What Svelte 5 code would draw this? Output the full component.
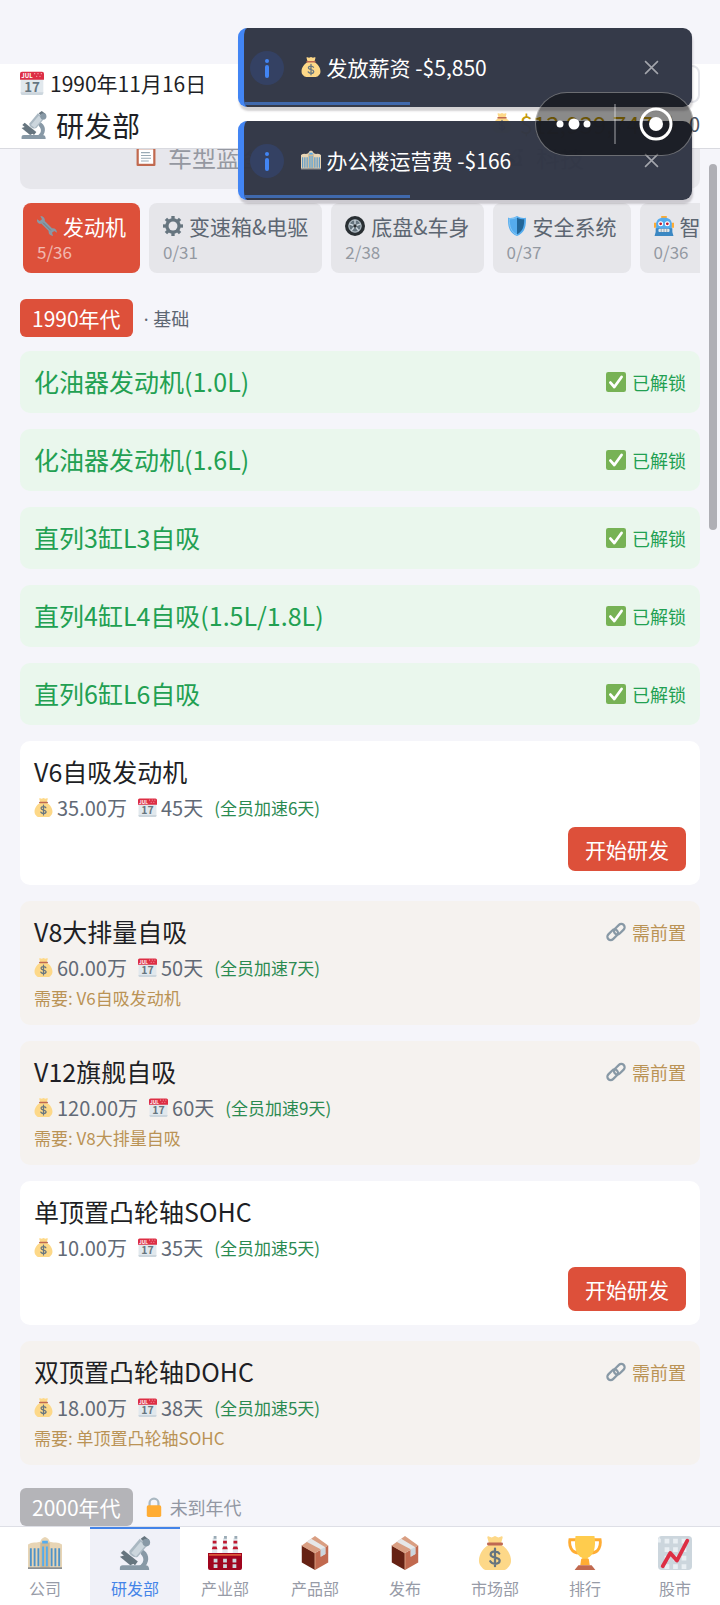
<script>
  const toasts = [
    { id: 1, icon: 'money', text: '发放薪资 -$5,850' },
    { id: 2, icon: 'office', text: '办公楼运营费 -$166' },
  ];

  const categories = [
    { icon: 'wrench', name: '发动机', count: '5/36' },
    { icon: 'gear', name: '变速箱&电驱', count: '0/31' },
    { icon: 'tyre', name: '底盘&车身', count: '2/38' },
    { icon: 'shield', name: '安全系统', count: '0/37' },
    { icon: 'robot', name: '智能驾驶', count: '0/36' },
  ];

  const techs = [
    { name: '化油器发动机(1.0L)', state: 'unlocked' },
    { name: '化油器发动机(1.6L)', state: 'unlocked' },
    { name: '直列3缸L3自吸', state: 'unlocked' },
    { name: '直列4缸L4自吸(1.5L/1.8L)', state: 'unlocked' },
    { name: '直列6缸L6自吸', state: 'unlocked' },
    { name: 'V6自吸发动机', state: 'ready', cost: '35.00万', days: 45, boost: 6 },
    { name: 'V8大排量自吸', state: 'locked', cost: '60.00万', days: 50, boost: 7, needs: 'V6自吸发动机' },
    { name: 'V12旗舰自吸', state: 'locked', cost: '120.00万', days: 60, boost: 9, needs: 'V8大排量自吸' },
    { name: '单顶置凸轮轴SOHC', state: 'ready', cost: '10.00万', days: 35, boost: 5 },
    { name: '双顶置凸轮轴DOHC', state: 'locked', cost: '18.00万', days: 38, boost: 5, needs: '单顶置凸轮轴SOHC' },
  ];

  const navItems = [
    { icon: 'office', name: '公司' },
    { icon: 'microscope', name: '研发部' },
    { icon: 'factory', name: '产业部' },
    { icon: 'box', name: '产品部' },
    { icon: 'box', name: '发布' },
    { icon: 'money', name: '市场部' },
    { icon: 'trophy', name: '排行' },
    { icon: 'chart', name: '股市' },
  ];

  let activeCategory = $state('发动机');
  let activeNav = $state('研发部');
  let closed = $state([]);
  let visibleToasts = $derived(toasts.filter((t) => !closed.includes(t.id)));
</script>

{#snippet icon(name)}
  <svg class="icon" viewBox="0 0 36 36" aria-hidden="true">
    {#if name === 'calendar'}
      <path fill="#e1e8ed" d="M1 9h34v24a3 3 0 0 1-3 3H4a3 3 0 0 1-3-3z" />
      <path fill="#ccd6dd" d="M1 32h34v1a3 3 0 0 1-3 3H4a3 3 0 0 1-3-3z" />
      <path fill="#dd2e44" d="M3 1h30a3 3 0 0 1 3 3v9H0V4a3 3 0 0 1 3-3z" />
      <g fill="#f4abba">
        <circle cx="22" cy="4" r="1" /><circle cx="27" cy="4" r="1" /><circle cx="32" cy="4" r="1" />
        <circle cx="25" cy="8" r="1" /><circle cx="30" cy="8" r="1" />
      </g>
      <text x="2" y="11" font-size="9" font-weight="700" fill="#fff">JUL</text>
      <text x="18" y="31" font-size="20" font-weight="700" text-anchor="middle" fill="#66757f">17</text>
    {:else if name === 'money'}
      <path fill="#fdd888" d="M12 9 10 2c-.4-1 .5-2 1.500-1.500l3 1L18 0l3.500 1.500 3-1c1-.5 2 .5 1.500 1.500l-2 7c6 3 11 10 11 17 0 3-1 5-3 7-1.500 2-3 3-6 3H10c-3 0-4.500-1-6-3-2-2-3-4-3-7 0-7 5-14 11-17z" />
      <path fill="#bf6952" d="M11 7h14a1.500 1.500 0 0 1 0 3H11a1.500 1.500 0 0 1 0-3z" />
      <path fill="none" stroke="#67757f" stroke-width="2.400" stroke-linecap="round" d="M22.500 18.500c-1-1.700-2.500-2.200-4.500-2.200-2.700 0-4.600 1.200-4.600 3.200 0 4.500 9.500 2.200 9.500 6.500 0 2.200-2 3.400-4.700 3.400-2.400 0-4.200-.8-5.200-2.600M18 13.500v18.500" />
    {:else if name === 'microscope'}
      <path fill="#66757f" d="m3 18 3-3 15 12-3 4z" />
      <path fill="#8899a6" d="M25 14c8 3 9 12 4 18h-7c5-3 7-8 2-13z" />
      <path fill="#aab8c2" d="m12 16 11-13 8 7-10 12c-3 2-10-2-9-6z" />
      <path fill="#ccd6dd" d="m14 18 10-12 5 4-10 12z" />
      <path fill="#66757f" d="m24 3 4-3 5 4-3 5z" />
      <circle cx="30" cy="7" r="4" fill="#8899a6" />
      <path fill="#8899a6" d="M2 34c0-2 1-3 3-3h24c3 0 4 2 4 5H2z" />
      <path fill="#66757f" d="m2 22 6-2 9 9-4 2z" />
    {:else if name === 'office'}
      <path fill="#e8d5b5" d="M0 9q4-3 9-2l4-1q1-4 5-5 4 1 5 5l4 1q5-1 9 2v25H0z" />
      <path fill="#cdb996" d="M13 7h10v27H13z" />
      <path fill="#4f93c8" d="M2 13h2v19H2zm4 0h2v19H6zm4 0h2v19h-2zm14 0h2v19h-2zm4 0h2v19h-2zm4 0h2v19h-2z" />
      <path fill="#55acee" d="M15 11h2v21h-2zm4 0h2v21h-2zM15 5h6v3h-6z" />
      <path fill="#8c8f92" d="M0 33h36v2H0z" />
    {:else if name === 'factory'}
      <path fill="#e1e8ed" d="m5 2 4 0 1 18H4zm11 0 4 0 1 18h-6zm11 0 4 0 1 18h-6z" />
      <path fill="#be1931" d="M5 5h4v3H5zm0 6h4l1 3H4zm11-6h4v3h-4zm0 6h4l1 3h-6zM27 5h4v3h-4zm0 6h4l1 3h-6z" />
      <path fill="#99aab5" d="M6 0h3v3H6zm11 0h3v3h-3zm11 0h3v3h-3z" />
      <path fill="#a0041e" d="M0 18h36v16a2 2 0 0 1-2 2H2a2 2 0 0 1-2-2z" />
      <path fill="#dd5a3a" d="M1 19h34v2H1z" />
      <path fill="#ccd6dd" d="M6 24h4v4H6zm10 0h4v4h-4zm10 0h4v4h-4zM6 30h4v4H6zm10 0h4v4h-4zm10 0h4v4h-4z" />
    {:else if name === 'box'}
      <path fill="#662113" d="M4 10v18l14 8V18z" />
      <path fill="#c1694f" d="M18 18v18l14-8V10z" />
      <path fill="#d99e82" d="M18 0 4 10l14 8 14-8z" />
      <path fill="#e6e7e8" d="m9 6 5-3 15 9v7l-5 3v-8z" />
      <path fill="#ccd6dd" d="m24 14 5-2v7l-5 3z" />
      <path fill="none" stroke="#d99e82" d="m4 10 14 8v18" />
    {:else if name === 'trophy'}
      <path fill="none" stroke="#ffac33" stroke-width="3" d="M9 4H2c-1 6 1 14 10 14M27 4h7c1 6-1 14-10 14" />
      <path fill="#ffcc4d" d="M8 0h20c2 12-1 21-7 23v7h-6v-7C9 21 6 12 8 0z" />
      <path fill="#ffac33" d="M14 24h8l1 7H13z" />
      <path fill="#c1694f" d="M11 31h14l4 5H7z" />
    {:else if name === 'chart'}
      <rect width="36" height="36" rx="4" fill="#ccd6dd" />
      <path fill="#e9eff3" d="M0 4a4 4 0 0 1 2-3v2h1v4H0zm7-1h5v5H7zm9 0h5v5h-5zm9 0h5v5h-5zM7 12h5v5H7zm9 0h5v5h-5zm9 0h5v5h-5zM7 21h5v5H7zm9 0h5v5h-5zm9 0h5v5h-5zM7 30h5v5H7zm9 0h5v5h-5zm9 0h5v5h-5z" />
      <path fill="none" stroke="#dd2e44" stroke-width="4" stroke-linecap="round" stroke-linejoin="round" d="m5 32 8-14 7 8L31 5" />
    {:else if name === 'clipboard'}
      <rect x="1" y="2" width="34" height="34" rx="2" fill="#c1694f" />
      <path fill="#fff" d="M5 6h26v26H5z" />
      <path stroke="#99aab5" stroke-width="2" d="M9 12h16M9 17h18M9 22h18M9 27h14" />
      <path fill="#ccd6dd" d="M12 0h12v6H12z" />
    {:else if name === 'wrench'}
      <path fill="#8899a6" d="M6 0c5 0 9 4 8 9l13 13c5-1 9 3 9 8l-5-3-4 3 2 6c-5 0-9-4-8-9L8 14C3 15-1 11 0 6l5 3 4-3z" />
      <path fill="none" stroke="#66757f" stroke-width="1.500" d="m11 12 14 14" />
    {:else if name === 'gear'}
      <g fill="#66757f">
        <circle cx="18" cy="18" r="14" />
        <path d="M15 0h6v36h-6z" />
        <path d="M15 0h6v36h-6z" transform="rotate(45 18 18)" />
        <path d="M15 0h6v36h-6z" transform="rotate(90 18 18)" />
        <path d="M15 0h6v36h-6z" transform="rotate(135 18 18)" />
      </g>
      <circle cx="18" cy="18" r="8" fill="#e6e6ea" />
    {:else if name === 'tyre'}
      <circle cx="18" cy="18" r="18" fill="#292f33" />
      <circle cx="18" cy="18" r="12" fill="#66757f" />
      <circle cx="18" cy="18" r="11" fill="none" stroke="#ccd6dd" stroke-width="1.500" />
      <path stroke="#ccd6dd" stroke-width="2.500" d="M18 18V7m0 11 10-4M18 18l7 9m-7-9-7 9m7-9L8 14" />
      <circle cx="18" cy="18" r="3" fill="#292f33" />
    {:else if name === 'shield'}
      <path fill="#55acee" d="M18 0c5 3 10 4 16 3 1 17-3 28-16 33C5 31 1 20 2 3 8 4 13 3 18 0z" />
      <path fill="#226699" d="M18 3c4 2 8 3 13 3 0 14-3 22-13 27z" />
      <path fill="none" stroke="#8ccaf7" stroke-width="1.500" d="M18 2C13 5 9 5 4 5c0 15 4 24 14 29" />
    {:else if name === 'robot'}
      <path fill="#ffac33" d="M13 0h10v5H13zM0 12h5v9H0zm31 0h5v9h-5z" />
      <path fill="#55acee" d="M4 13C5 6 10 3 18 3s13 3 14 10v11H4z" />
      <path fill="#3b88c3" d="M3 22h30v7l2 7H1l2-7z" />
      <circle cx="12" cy="14" r="4.500" fill="#fff" /><circle cx="24" cy="14" r="4.500" fill="#fff" />
      <circle cx="12" cy="14" r="2.500" fill="#be1931" /><circle cx="24" cy="14" r="2.500" fill="#be1931" />
      <rect x="8" y="23" width="20" height="6" rx="2" fill="#e1e8ed" />
      <path stroke="#66757f" d="M13 23v6m5-6v6m5-6v6" />
    {:else if name === 'check'}
      <rect width="36" height="36" rx="4" fill="#77b255" />
      <path fill="none" stroke="#fff" stroke-width="5" stroke-linecap="round" stroke-linejoin="round" d="m8 19 7 8L28 9" />
    {:else if name === 'link'}
      <g fill="none" stroke="#8899a6" stroke-width="4">
        <rect x="13" y="7" width="22" height="12" rx="6" transform="rotate(-45 24 13)" />
        <rect x="1" y="17" width="22" height="12" rx="6" transform="rotate(-45 12 23)" />
      </g>
    {:else if name === 'lock'}
      <path fill="none" stroke="#aab8c2" stroke-width="4" d="M10 18v-7a8 8 0 0 1 16 0v7" />
      <rect x="5" y="15" width="26" height="21" rx="3" fill="#ffac33" />
    {/if}
  </svg>
{/snippet}

<div class="app">
  <header>
    <div class="row">
      <span class="date">{@render icon('calendar')} 1990年11月16日</span>
      <button class="speed" aria-label="速度"></button>
    </div>
    <div class="row">
      <h1>{@render icon('microscope')} 研发部</h1>
      <div class="wallet">
        {@render icon('money')}
        <span class="cash">$12,939,747</span>
        <span class="star">★</span>
        <span>0</span>
      </div>
    </div>
  </header>

  <main>
    <div class="views">
      <button>{@render icon('clipboard')} 车型蓝图</button>
      <button>{@render icon('microscope')} 科技</button>
    </div>

    <div class="categories">
      {#each categories as cat}
        <button
          class="category"
          class:active={cat.name === activeCategory}
          onclick={() => (activeCategory = cat.name)}
        >
          <span class="cat-name">{@render icon(cat.icon)}{cat.name}</span>
          <span class="cat-count">{cat.count}</span>
        </button>
      {/each}
    </div>

    <div class="era">
      <span class="era-badge">1990年代</span>
      <span class="era-note">· 基础</span>
    </div>

    <div class="techs">
      {#each techs as tech}
        <section class="tech {tech.state}">
          <div class="tech-head">
            <h2>{tech.name}</h2>
            {#if tech.state === 'unlocked'}
              <span class="status">{@render icon('check')}已解锁</span>
            {:else if tech.state === 'locked'}
              <span class="status">{@render icon('link')}需前置</span>
            {/if}
          </div>
          {#if tech.cost}
            <div class="meta">
              <span>{@render icon('money')}{tech.cost}</span>
              <span>{@render icon('calendar')}{tech.days}天</span>
              <span class="boost">(全员加速{tech.boost}天)</span>
            </div>
          {/if}
          {#if tech.needs}
            <p class="needs">需要: {tech.needs}</p>
          {/if}
          {#if tech.state === 'ready'}
            <button class="start">开始研发</button>
          {/if}
        </section>
      {/each}
    </div>

    <div class="era next">
      <span class="era-badge future">2000年代</span>
      <span class="era-note muted">{@render icon('lock')}未到年代</span>
    </div>
  </main>

  <nav>
    {#each navItems as item}
      <a
        href="#{item.name}"
        class:active={item.name === activeNav}
        onclick={() => (activeNav = item.name)}
      >
        {@render icon(item.icon)}
        <span>{item.name}</span>
      </a>
    {/each}
  </nav>

  <div class="scrollbar"></div>

  <div class="toasts">
    {#each visibleToasts as toast (toast.id)}
      <div class="toast">
        <svg class="info" viewBox="0 0 34 34" aria-hidden="true">
          <circle cx="17" cy="17" r="17" fill="#344163" />
          <circle cx="17" cy="10" r="2" fill="#4285f4" />
          <path stroke="#4285f4" stroke-width="4" stroke-linecap="round" d="M17 16v9" />
        </svg>
        <span class="toast-text">{@render icon(toast.icon)}{toast.text}</span>
        <button class="close" aria-label="关闭" onclick={() => closed.push(toast.id)}>
          <svg viewBox="0 0 14 14"><path d="m1 1 12 12M13 1 1 13" /></svg>
        </button>
        <div class="progress"></div>
      </div>
    {/each}
  </div>

  <div class="capsule">
    <button aria-label="更多">
      <svg viewBox="0 0 36 36">
        <circle cx="4" cy="18" r="3.500" /><circle cx="18" cy="18" r="5.500" /><circle cx="31" cy="18" r="3.500" />
      </svg>
    </button>
    <span class="divider"></span>
    <button aria-label="退出">
      <svg viewBox="0 0 36 36">
        <circle cx="18" cy="18" r="15" fill="none" stroke="#fff" stroke-width="3" />
        <circle cx="18" cy="18" r="7" />
      </svg>
    </button>
  </div>
</div>

<style>
  :global(body) {
    background: #f5f5fa;
  }

  .app {
    position: relative;
    display: flex;
    flex-direction: column;
    height: 100vh;
    padding-top: 64px;
    box-sizing: border-box;
    overflow: hidden;
    background: #f5f5fa;
    color: #1e1f25;
    font-family: 'Noto Sans CJK SC', sans-serif;
  }

  button {
    border: none;
    margin: 0;
    padding: 0;
    background: none;
    color: inherit;
    font: inherit;
    cursor: pointer;
  }

  .icon {
    flex: none;
    width: 20px;
    height: 20px;
  }

  header {
    background: #fff;
    border-bottom: 1px solid #d9dae0;
    padding: 0 20px;
  }

  .row {
    display: flex;
    align-items: center;
    justify-content: space-between;
    height: 40px;
  }

  .row + .row {
    height: 44px;
  }

  .date {
    display: flex;
    align-items: center;
    gap: 6px;
    padding-bottom: 2px;
    font-size: 21px;
  }

  .date .icon {
    width: 24px;
    height: 24px;
  }

  .speed {
    width: 140px;
    height: 38px;
    border: 2px solid #e4e5ea;
    border-radius: 8px;
  }

  h1 {
    display: flex;
    align-items: center;
    gap: 8px;
    margin: 0;
    padding-bottom: 2px;
    font-size: 28px;
    font-weight: 400;
  }

  h1 .icon {
    width: 28px;
    height: 28px;
  }

  .wallet {
    display: flex;
    align-items: center;
    gap: 8px;
    padding-bottom: 6px;
    font-size: 20px;
    color: #4b5563;
  }

  .cash {
    font-size: 24px;
  }

  .cash,
  .star {
    color: #c49a08;
  }

  main {
    flex: 1;
    min-height: 0;
    overflow: hidden;
    padding: 0 20px;
  }

  .views {
    display: flex;
    gap: 8px;
    margin-top: -24px;
  }

  .views button {
    flex: auto;
    display: flex;
    align-items: center;
    justify-content: center;
    gap: 12px;
    height: 64px;
    padding-bottom: 2px;
    box-sizing: border-box;
    border-radius: 10px;
    background: #e7e7ec;
    color: #9598a1;
    font-size: 24px;
  }

  .categories {
    display: flex;
    gap: 9px;
    margin-top: 14px;
    padding-left: 3px;
    overflow: hidden;
  }

  .category {
    flex: none;
    display: flex;
    flex-direction: column;
    padding: 9px 14px;
    border-radius: 8px;
    background: #e6e6ea;
    color: #5d6672;
    text-align: left;
  }

  .category.active {
    background: #dd503a;
    color: #fff;
  }

  .cat-name {
    display: flex;
    align-items: center;
    gap: 6px;
    font-size: 21px;
    line-height: 28px;
  }

  .cat-count {
    font-size: 17px;
    line-height: 24px;
    opacity: 0.6;
  }

  .era {
    display: flex;
    align-items: center;
    gap: 11px;
    margin: 26px 0 14px;
  }

  .era.next {
    margin-top: 23px;
  }

  .era-badge {
    padding: 0 12px;
    border-radius: 6px;
    background: #dd503a;
    color: #fff;
    font-size: 21px;
    line-height: 38px;
  }

  .era-badge.future {
    background: #b4b4b8;
  }

  .era-note {
    display: flex;
    align-items: center;
    gap: 6px;
    color: #5d6672;
    font-family: 'Noto Sans', 'Noto Sans CJK SC', sans-serif;
    font-size: 18px;
  }

  .era-note.muted {
    color: #9297a3;
  }

  .techs {
    display: flex;
    flex-direction: column;
    gap: 16px;
  }

  .tech {
    padding: 14px;
    border-radius: 10px;
    background: #fff;
  }

  .unlocked {
    background: #eaf7ed;
    color: #22a052;
  }

  .locked {
    background: #f5f2ef;
  }

  .tech-head {
    display: flex;
    justify-content: space-between;
    height: 34px;
  }

  h2 {
    margin: 0;
    font-size: 25px;
    font-weight: 400;
    line-height: 32px;
  }

  .status {
    display: flex;
    align-items: center;
    gap: 6px;
    font-size: 18px;
  }

  .locked .status,
  .needs {
    color: #ba9355;
  }

  .meta {
    display: flex;
    align-items: center;
    gap: 11px;
    margin-top: 2px;
    height: 32px;
    color: #626a76;
    font-size: 20px;
  }

  .meta span {
    display: flex;
    align-items: center;
    gap: 4px;
  }

  .meta .icon {
    width: 19px;
    height: 19px;
  }

  .meta .boost {
    color: #2a8a50;
    font-size: 17px;
  }

  .needs {
    margin: 0;
    padding-top: 2px;
    font-size: 17px;
    line-height: 26px;
  }

  .start {
    display: block;
    margin: 4px 0 0 auto;
    padding: 0 17px;
    border-radius: 7px;
    background: #dd503a;
    color: #fff;
    font-size: 21px;
    line-height: 44px;
  }

  nav {
    display: flex;
    height: 79px;
    box-sizing: border-box;
    background: #fff;
    border-top: 1px solid #dedfe6;
  }

  nav a {
    flex: 1;
    display: flex;
    flex-direction: column;
    align-items: center;
    padding-top: 9px;
    color: #979ba7;
    font-size: 16px;
    line-height: 24px;
    text-decoration: none;
  }

  nav .icon {
    width: 34px;
    height: 34px;
    margin-bottom: 6px;
  }

  nav a.active {
    background: #f0f1f8;
    box-shadow: inset 0 2px #4484e8;
    color: #4484e8;
  }

  .scrollbar {
    position: absolute;
    top: 164px;
    right: 3px;
    width: 8px;
    height: 366px;
    border-radius: 4px;
    background: #afafb5;
  }

  .toasts {
    position: absolute;
    top: 28px;
    left: 33%;
    right: 28px;
    display: flex;
    flex-direction: column;
    gap: 14px;
  }

  .toast {
    position: relative;
    display: flex;
    align-items: center;
    height: 79px;
    box-sizing: border-box;
    padding: 0 33px 0 6px;
    border-left: 6px solid #4285f4;
    border-radius: 9px;
    background: rgba(49, 54, 69, 0.98);
    box-shadow: 1px 4px 2px rgba(60, 50, 60, 0.22);
    color: #fff;
    overflow: hidden;
  }

  .info {
    width: 34px;
    height: 34px;
    margin-right: 17px;
  }

  .toast-text {
    display: flex;
    align-items: center;
    gap: 6px;
    padding-bottom: 2px;
    font-size: 21px;
  }

  .close {
    display: flex;
    margin-left: auto;
  }

  .close svg {
    width: 15px;
    height: 15px;
    fill: none;
    stroke: #a3a5ac;
    stroke-width: 1.5;
  }

  .progress {
    position: absolute;
    left: 0;
    bottom: 2px;
    width: 37%;
    height: 3px;
    background: #4069ad;
  }

  .capsule {
    position: absolute;
    top: 92px;
    right: 26px;
    display: flex;
    align-items: center;
    justify-content: space-between;
    width: 159px;
    height: 64px;
    box-sizing: border-box;
    padding: 0 19px 0 20px;
    border: 1px solid rgba(255, 255, 255, 0.35);
    border-radius: 32px;
    background: rgba(0, 0, 0, 0.46);
  }

  .capsule button {
    display: flex;
  }

  .capsule svg {
    width: 36px;
    height: 36px;
    fill: #fff;
  }

  .divider {
    width: 2px;
    height: 40px;
    background: rgba(255, 255, 255, 0.3);
  }
</style>
